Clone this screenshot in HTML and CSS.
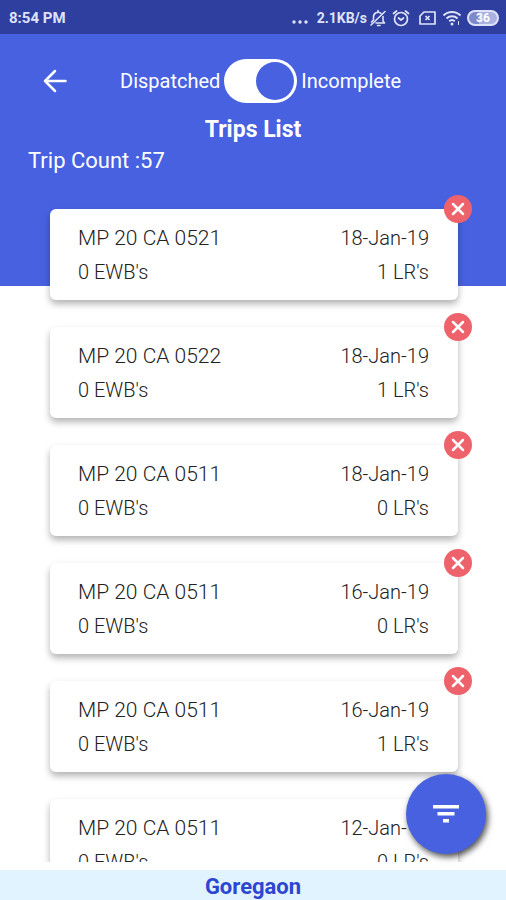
FILE: index.html
```html
<!DOCTYPE html>
<html lang="en">
<head>
    <meta charset="UTF-8">
    <meta name="viewport" content="width=device-width, initial-scale=1.0">
    <title>Trips List</title>
    <link rel="stylesheet" href="styles.css">
</head>
<body>
    <div class="status-bar">
        <span class="clock">8:54 PM</span>
        <div class="status-icons">
            <svg class="dots" width="16" height="18" viewBox="0 0 16 18" fill="currentColor">
                <circle cx="2" cy="13" r="1.7"/><circle cx="8" cy="13" r="1.7"/><circle cx="14" cy="13" r="1.7"/>
            </svg>
            <span class="speed">2.1KB/s</span>
            <!-- Muted bell -->
            <svg class="bell" width="18" height="18" viewBox="0 0 18 18" fill="none" stroke="currentColor" stroke-width="1.6" stroke-linecap="round" stroke-linejoin="round">
                <path d="M4.500 11V8a4.500 4.500 0 0 1 7.500-3.500M14 7.500V12l1.500 2H7M8.500 16.500h2.500M9 3V1.500M4.500 11L2.500 13"/>
                <path d="M2 16L16 2.500"/>
            </svg>
            <!-- Alarm -->
            <svg class="alarm" width="18" height="18" viewBox="0 0 18 18" fill="none" stroke="currentColor" stroke-width="1.7" stroke-linecap="round" stroke-linejoin="round">
                <circle cx="9" cy="10" r="6.500"/>
                <path d="M6.500 9L9 11l2.500-2M1.500 4.500L4.500 2M16.500 4.500L13.500 2"/>
            </svg>
            <!-- No SIM -->
            <svg class="sim" width="17" height="14" viewBox="0 0 17 14" fill="none" stroke="currentColor" stroke-width="1.7" stroke-linejoin="round">
                <path d="M5 1h11v12H1V5z"/>
                <path d="M6.500 5l4 4M10.500 5l-4 4"/>
            </svg>
            <!-- Wifi -->
            <svg class="wifi" width="20" height="16" viewBox="0 0 20 16" fill="none" stroke="currentColor" stroke-width="2">
                <path d="M1.500 5.500a12 12 0 0 1 17 0M4.500 8.500a8 8 0 0 1 11 0M7.200 11.300a4.200 4.200 0 0 1 5.600 0"/>
                <circle cx="10" cy="14" r="1.500" fill="currentColor" stroke="none"/>
                <path d="M16.500 11v4" stroke-width="1"/>
            </svg>
            <span class="battery">36</span>
        </div>
    </div>

    <header class="header">
        <div class="toolbar">
            <button type="button" class="back" aria-label="Back">
                <svg width="24" height="24" viewBox="0 0 24 24" fill="none" stroke="currentColor" stroke-width="2.5" stroke-linecap="round" stroke-linejoin="round">
                    <path d="M22.500 12H2M12 2L2 12l10 10"/>
                </svg>
            </button>
            <div class="switch-group">
                <label for="tripStatus">Dispatched</label>
                <input type="checkbox" id="tripStatus" class="switch" checked>
                <label for="tripStatus">Incomplete</label>
            </div>
        </div>
        <h1>Trips List</h1>
        <p class="trip-count">Trip Count :57</p>
    </header>

    <main class="trips">
        <article class="trip-card">
            <div class="row"><span class="vehicle">MP 20 CA 0521</span><span>18-Jan-19</span></div>
            <div class="row"><span>0 EWB's</span><span>1 LR's</span></div>
            <button type="button" class="remove" aria-label="Remove trip"><svg width="14" height="14" viewBox="0 0 14 14"><path d="M2 2l10 10M12 2L2 12"/></svg></button>
        </article>
        <article class="trip-card">
            <div class="row"><span class="vehicle">MP 20 CA 0522</span><span>18-Jan-19</span></div>
            <div class="row"><span>0 EWB's</span><span>1 LR's</span></div>
            <button type="button" class="remove" aria-label="Remove trip"><svg width="14" height="14" viewBox="0 0 14 14"><path d="M2 2l10 10M12 2L2 12"/></svg></button>
        </article>
        <article class="trip-card">
            <div class="row"><span class="vehicle">MP 20 CA 0511</span><span>18-Jan-19</span></div>
            <div class="row"><span>0 EWB's</span><span>0 LR's</span></div>
            <button type="button" class="remove" aria-label="Remove trip"><svg width="14" height="14" viewBox="0 0 14 14"><path d="M2 2l10 10M12 2L2 12"/></svg></button>
        </article>
        <article class="trip-card">
            <div class="row"><span class="vehicle">MP 20 CA 0511</span><span>16-Jan-19</span></div>
            <div class="row"><span>0 EWB's</span><span>0 LR's</span></div>
            <button type="button" class="remove" aria-label="Remove trip"><svg width="14" height="14" viewBox="0 0 14 14"><path d="M2 2l10 10M12 2L2 12"/></svg></button>
        </article>
        <article class="trip-card">
            <div class="row"><span class="vehicle">MP 20 CA 0511</span><span>16-Jan-19</span></div>
            <div class="row"><span>0 EWB's</span><span>1 LR's</span></div>
            <button type="button" class="remove" aria-label="Remove trip"><svg width="14" height="14" viewBox="0 0 14 14"><path d="M2 2l10 10M12 2L2 12"/></svg></button>
        </article>
        <article class="trip-card">
            <div class="row"><span class="vehicle">MP 20 CA 0511</span><span>12-Jan-19</span></div>
            <div class="row"><span>0 EWB's</span><span>0 LR's</span></div>
        </article>
    </main>

    <footer class="location">Goregaon</footer>

    <button type="button" class="filter" aria-label="Filter trips">
        <svg width="26" height="18" viewBox="0 0 26 18" fill="currentColor">
            <path d="M0 0h26v3.500H0zM4.500 7h17v3.500h-17zM10 14h6v3.500h-6z"/>
        </svg>
    </button>
</body>
</html>
```
FILE: styles.css
```css
* {
    box-sizing: border-box;
}

body {
    margin: 0;
    height: 100vh;
    display: flex;
    flex-direction: column;
    position: relative;
    overflow: hidden;
    background-color: #fff;
    font-family: Roboto, "Liberation Sans", sans-serif;
    color: #222;
}

button {
    padding: 0;
    border: none;
    background: none;
    color: inherit;
    cursor: pointer;
    display: flex;
    align-items: center;
    justify-content: center;
}

/* Status bar */
.status-bar {
    flex: none;
    height: 34px;
    padding: 1px 7px 0 9px;
    display: flex;
    align-items: center;
    justify-content: space-between;
    background-color: #2f3f9f;
    color: #dfe3fa;
    font-size: 14px;
    font-weight: 700;
}

.clock {
    font-size: 15px;
}

.status-icons {
    display: flex;
    align-items: center;
}

.dots {
    margin-right: 9px;
}

.bell {
    margin-left: 2px;
}

.alarm {
    margin: 0 9px 0 5px;
}

.wifi {
    margin: 0 5px 0 6px;
}

.battery {
    width: 32px;
    height: 16px;
    border: 2px solid #dfe3fa;
    border-radius: 8px;
    background: linear-gradient(to right, #7d88cc 36%, #aab2e2 36%);
    color: #fff;
    font-size: 12px;
    line-height: 12px;
    text-align: center;
}

/* Header */
.header {
    flex: none;
    padding: 25px 28px 112px;
    background-color: #4761e1;
    color: #fff;
}

.toolbar {
    display: flex;
    align-items: center;
    padding-left: 15px;
}

.switch-group {
    display: flex;
    align-items: center;
    gap: 4px;
    margin-left: 53px;
    font-size: 20px;
}

.switch {
    appearance: none;
    width: 73px;
    height: 44px;
    margin: 0;
    padding: 3px;
    border-radius: 22px;
    background-color: #fff;
    display: flex;
    cursor: pointer;
}

.switch::before {
    content: "";
    width: 38px;
    height: 38px;
    border-radius: 50%;
    background-color: #4761e1;
}

.switch:checked {
    justify-content: flex-end;
}

h1 {
    margin: 13px 0 4px;
    font-size: 23px;
    line-height: 28px;
    font-weight: 700;
    text-align: center;
}

.trip-count {
    margin: 0;
    font-size: 22px;
    line-height: 26px;
}

/* Trip cards slide up over the header */
.trips {
    flex: 1 1 0;
    min-height: 0;
    position: relative;
    margin: -96px 0 8px;
    padding: 19px 48px 0 50px;
    overflow: hidden;
}

.trip-card {
    position: relative;
    margin-bottom: 27px;
    padding: 14px 29px 13px 28px;
    border-radius: 6px;
    background-color: #fff;
    box-shadow: 0 4px 7px rgba(0, 0, 0, 0.3);
}

.row {
    display: flex;
    justify-content: space-between;
    align-items: center;
    height: 30px;
    font-size: 20px;
    font-weight: 300;
}

.row + .row {
    margin-top: 4px;
}

.vehicle {
    font-size: 21px;
}

.remove {
    position: absolute;
    top: -14px;
    right: -14px;
    width: 28px;
    height: 28px;
    border-radius: 50%;
    background-color: #ee626b;
}

.remove path {
    stroke: #fff;
    stroke-width: 2.5;
    stroke-linecap: round;
}

/* Bottom bar */
.location {
    flex: none;
    height: 30px;
    background-color: #e1f3fe;
    color: #2d45d2;
    font-size: 22px;
    line-height: 33px;
    font-weight: 700;
    text-align: center;
}

.filter {
    position: absolute;
    right: 20px;
    bottom: 46px;
    width: 80px;
    height: 80px;
    border-radius: 50%;
    background-color: #4761e1;
    color: #fff;
    box-shadow: 2px 3px 6px rgba(0, 0, 0, 0.7);
}
```
